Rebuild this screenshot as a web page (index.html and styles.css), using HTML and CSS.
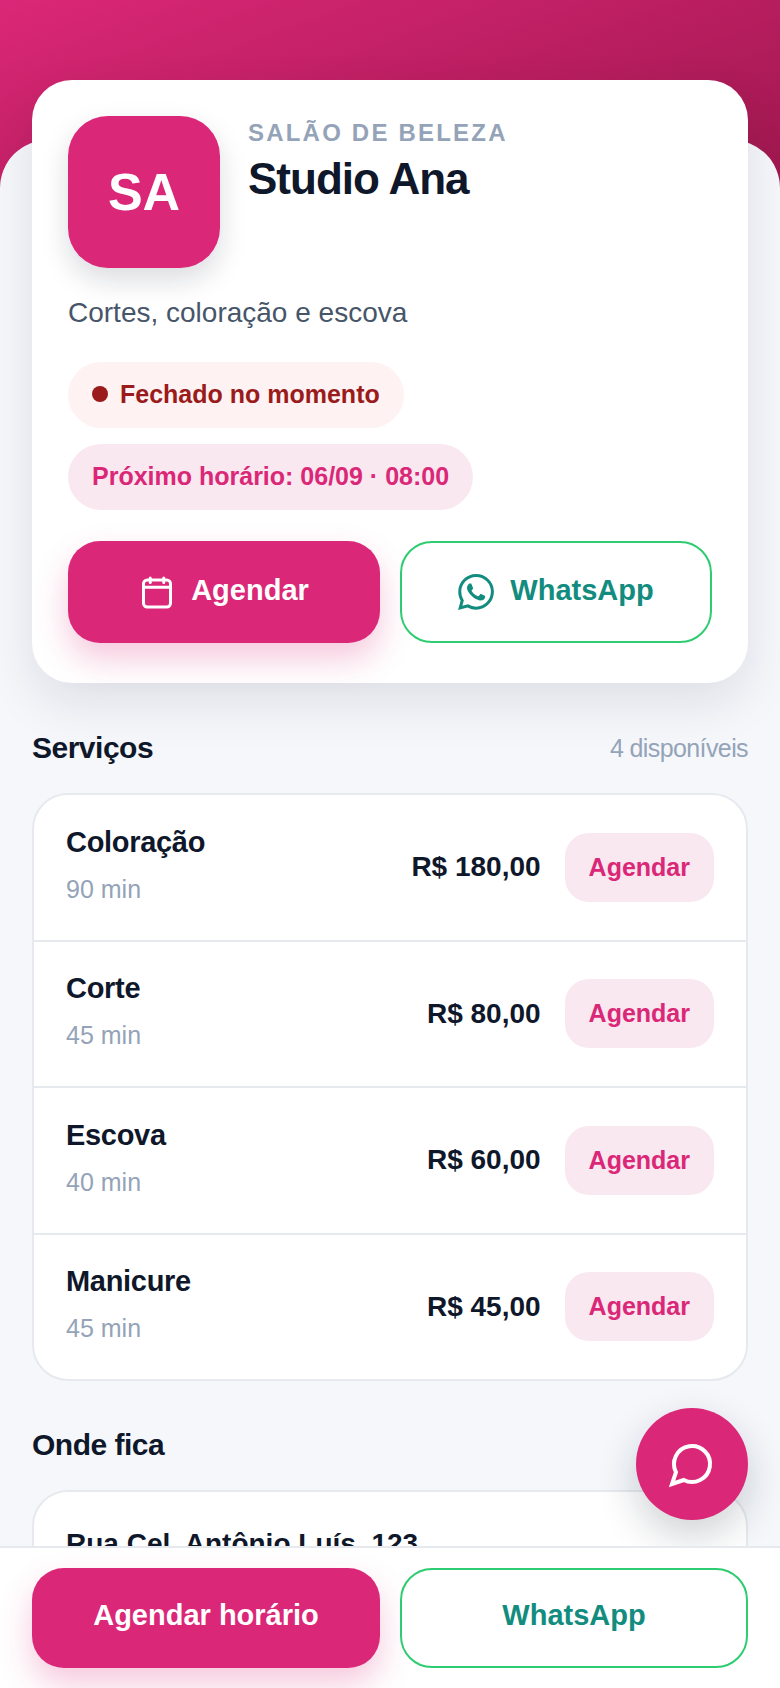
FILE: index.html
```html
<!DOCTYPE html>
<html lang="pt-BR">
<head>
  <meta charset="UTF-8" />
  <title>Studio Ana</title>
  <link rel="stylesheet" href="styles.css">
</head>
<body>

  <div class="hero"></div>

  <main class="sheet">
    <section class="profile-card">
      <div class="profile-head">
        <div class="avatar">SA</div>
        <div>
          <div class="category">SALÃO DE BELEZA</div>
          <h1 class="name">Studio Ana</h1>
        </div>
      </div>
      <p class="desc">Cortes, coloração e escova</p>
      <div class="pill pill-closed"><span class="dot"></span>Fechado no momento</div>
      <div class="pill pill-next">Próximo horário: 06/09 · 08:00</div>
      <div class="actions">
        <a class="btn btn-primary">
          <svg class="icon" viewBox="0 0 24 24" fill="none" stroke="currentColor" stroke-width="2" stroke-linecap="round" stroke-linejoin="round">
            <rect x="3" y="4" width="18" height="18" rx="2.5"/>
            <path d="M16.5 2.7v3M7.5 2.7v3M3 8.8h18"/>
          </svg>
          <span>Agendar</span>
        </a>
        <a class="btn btn-outline">
          <svg class="icon" viewBox="0 0 24 24" fill="currentColor">
            <path d="M17.472 14.382c-.297-.149-1.758-.867-2.03-.967-.273-.099-.471-.148-.67.15-.197.297-.767.966-.94 1.164-.173.199-.347.223-.644.075-.297-.15-1.255-.463-2.39-1.475-.883-.788-1.48-1.761-1.653-2.059-.173-.297-.018-.458.13-.606.134-.133.298-.347.446-.52.149-.174.198-.298.298-.497.099-.198.05-.371-.025-.52-.075-.149-.669-1.612-.916-2.207-.242-.579-.487-.5-.669-.51-.173-.008-.371-.01-.57-.01-.198 0-.52.074-.792.372-.272.297-1.04 1.016-1.04 2.479 0 1.462 1.065 2.875 1.213 3.074.149.198 2.096 3.2 5.077 4.487.709.306 1.262.489 1.694.625.712.227 1.36.195 1.871.118.571-.085 1.758-.719 2.006-1.413.248-.694.248-1.289.173-1.413-.074-.124-.272-.198-.57-.347m-5.421 7.403h-.004a9.87 9.87 0 01-5.031-1.378l-.361-.214-3.741.982.998-3.648-.235-.374a9.86 9.86 0 01-1.51-5.26c.001-5.45 4.436-9.884 9.888-9.884 2.64 0 5.122 1.03 6.988 2.898a9.825 9.825 0 012.893 6.994c-.003 5.45-4.437 9.884-9.885 9.884m8.413-18.297A11.815 11.815 0 0012.05 0C5.495 0 .16 5.335.157 11.892c0 2.096.547 4.142 1.588 5.945L.057 24l6.305-1.654a11.882 11.882 0 005.683 1.448h.005c6.554 0 11.89-5.335 11.893-11.893a11.821 11.821 0 00-3.48-8.413z"/>
          </svg>
          <span>WhatsApp</span>
        </a>
      </div>
    </section>

    <section class="section">
      <div class="section-head">
        <h2>Serviços</h2>
        <span class="count">4 disponíveis</span>
      </div>
      <div class="list">
        <div class="service">
          <div class="service-info">
            <div class="service-name">Coloração</div>
            <div class="service-time">90 min</div>
          </div>
          <div class="service-right">
            <div class="price">R$ 180,00</div>
            <a class="btn-small">Agendar</a>
          </div>
        </div>
        <div class="service">
          <div class="service-info">
            <div class="service-name">Corte</div>
            <div class="service-time">45 min</div>
          </div>
          <div class="service-right">
            <div class="price">R$ 80,00</div>
            <a class="btn-small">Agendar</a>
          </div>
        </div>
        <div class="service">
          <div class="service-info">
            <div class="service-name">Escova</div>
            <div class="service-time">40 min</div>
          </div>
          <div class="service-right">
            <div class="price">R$ 60,00</div>
            <a class="btn-small">Agendar</a>
          </div>
        </div>
        <div class="service">
          <div class="service-info">
            <div class="service-name">Manicure</div>
            <div class="service-time">45 min</div>
          </div>
          <div class="service-right">
            <div class="price">R$ 45,00</div>
            <a class="btn-small">Agendar</a>
          </div>
        </div>
      </div>
    </section>

    <section class="section section-location">
      <div class="section-head">
        <h2>Onde fica</h2>
      </div>
      <div class="list">
        <div class="address">Rua Cel. Antônio Luís, 123</div>
      </div>
    </section>
  </main>

  <a class="fab">
    <svg viewBox="0 0 24 24" fill="none" stroke="currentColor" stroke-width="2">
      <path d="M7.9 20A9 9 0 1 0 4 16.1L2 22Z"/>
    </svg>
  </a>

  <div class="bottom-bar">
    <a class="btn btn-primary"><span>Agendar horário</span></a>
    <a class="btn btn-outline"><span>WhatsApp</span></a>
  </div>

</body>
</html>
```

FILE: styles.css
```css
* {
  box-sizing: border-box;
}

html, body {
  height: 100%;
  overflow: hidden;
}

body {
  font-family: 'Liberation Sans', Arial, sans-serif;
  background: #f5f7fb;
  margin: 0;
  color: #0f172a;
}

.hero {
  height: 200px;
  background: linear-gradient(160deg, #db2777, #9d174d);
}

.sheet {
  margin-top: -60px;
  padding: 0.1px 32px 0;
  background: #f5f7fb;
  border-radius: 48px 48px 0 0;
}

.profile-card {
  margin-top: -60px;
  padding: 36px 36px 40px;
  background: white;
  border-radius: 40px;
  box-shadow: 0 20px 50px rgba(15, 23, 42, 0.1);
}

.profile-head {
  display: flex;
  gap: 28px;
}

.avatar {
  width: 152px;
  height: 152px;
  display: flex;
  align-items: center;
  justify-content: center;
  background: #db2777;
  color: white;
  font-size: 52px;
  font-weight: bold;
  border-radius: 40px;
  box-shadow: 0 12px 28px rgba(15, 23, 42, 0.15);
}

.category {
  margin-top: 3px;
  font-size: 24px;
  font-weight: bold;
  letter-spacing: 2.2px;
  color: #94a3b8;
}

.name {
  margin: 7px 0 0;
  font-size: 44px;
  font-weight: bold;
  letter-spacing: -1px;
  color: #0f172a;
}

.desc {
  margin: 27px 0 31px;
  font-size: 28px;
  line-height: 36px;
  color: #475569;
}

.pill {
  display: flex;
  width: fit-content;
  align-items: center;
  height: 66px;
  padding: 0 24px 2px;
  border-radius: 33px;
  font-size: 25px;
  font-weight: bold;
}

.pill-closed {
  background: #fef2f2;
  color: #991b1b;
}

.dot {
  width: 16px;
  height: 16px;
  margin-right: 12px;
  border-radius: 50%;
  background: #991b1b;
}

.pill-next {
  margin-top: 16px;
  background: #f9e8f0;
  color: #db2777;
}

.actions {
  display: grid;
  grid-template-columns: 1fr 1fr;
  gap: 20px;
  margin-top: 31px;
}

.btn {
  height: 102px;
  display: flex;
  align-items: center;
  justify-content: center;
  gap: 16px;
  border-radius: 32px;
  font-size: 29px;
  font-weight: bold;
}

.btn span {
  margin-bottom: 4px;
}

.btn-primary {
  background: #db2777;
  color: white;
  box-shadow: 0 16px 32px rgba(219, 39, 119, 0.25);
}

.btn-outline {
  background: white;
  color: #128c7e;
  border: 2px solid #2ecc71;
}

.icon {
  width: 36px;
  height: 36px;
}

.section {
  margin-top: 48px;
}

.section-location {
  margin-top: 47px;
}

.section-head {
  display: flex;
  justify-content: space-between;
  align-items: center;
  margin-bottom: 28px;
}

h2 {
  margin: 0;
  font-size: 30px;
  font-weight: bold;
  letter-spacing: -0.5px;
}

.count {
  font-size: 25px;
  letter-spacing: -0.6px;
  color: #94a3b8;
}

.list {
  background: white;
  border: 2px solid #e6e9ee;
  border-radius: 36px;
  overflow: hidden;
}

.service {
  display: flex;
  justify-content: space-between;
  align-items: center;
  padding: 29.75px 32px;
  border-bottom: 2px solid #e6e9ee;
}

.service:last-child {
  border-bottom: none;
}

.service-info {
  padding-bottom: 6px;
}

.service-name {
  font-size: 29px;
  line-height: 34px;
  font-weight: bold;
  letter-spacing: -0.3px;
}

.service-time {
  margin-top: 15px;
  font-size: 25px;
  line-height: 30px;
  color: #94a3b8;
}

.service-right {
  display: flex;
  align-items: center;
  gap: 24px;
}

.price {
  font-size: 28px;
  font-weight: bold;
}

.btn-small {
  padding: 20px 24px;
  background: #f9e8f0;
  color: #db2777;
  border-radius: 24px;
  font-size: 25px;
  font-weight: bold;
}

.address {
  padding: 36px 32px;
  font-size: 28px;
  font-weight: bold;
}

.fab {
  position: fixed;
  right: 32px;
  bottom: 168px;
  width: 112px;
  height: 112px;
  display: flex;
  align-items: center;
  justify-content: center;
  background: #db2777;
  color: white;
  border-radius: 50%;
  box-shadow: 0 16px 40px rgba(15, 23, 42, 0.2);
}

.fab svg {
  width: 48px;
  height: 48px;
}

.bottom-bar {
  position: fixed;
  left: 0;
  right: 0;
  bottom: 0;
  display: grid;
  grid-template-columns: 1fr 1fr;
  gap: 20px;
  padding: 20px 32px;
  background: white;
  border-top: 2px solid #e6e9ee;
}

.bottom-bar .btn {
  height: 100px;
}

.bottom-bar .btn span {
  margin-bottom: 6px;
}
```
